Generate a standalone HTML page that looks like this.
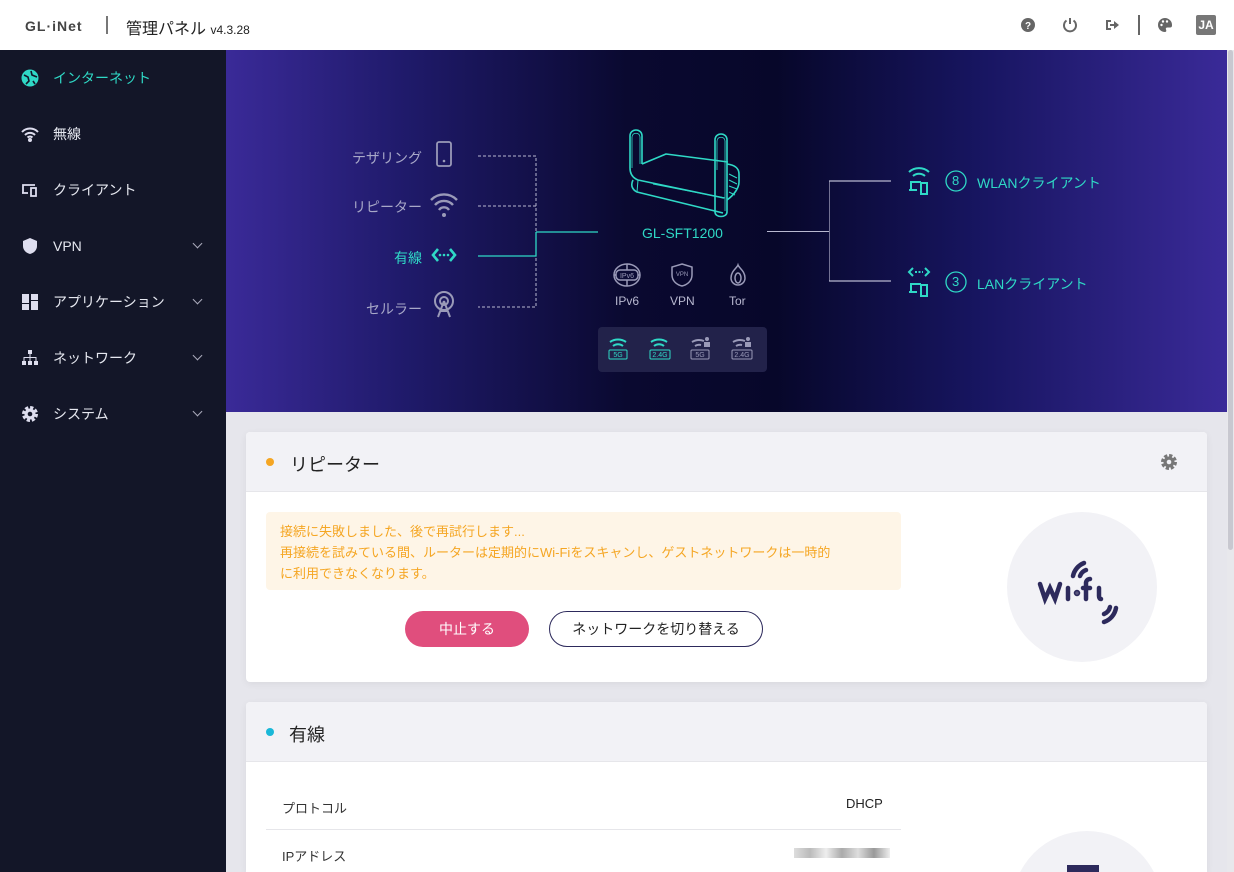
<!DOCTYPE html>
<html><head><meta charset="utf-8"><style>
*{margin:0;padding:0;box-sizing:border-box}
html{width:1234px;height:872px;overflow:hidden}
body{width:1234px;height:872px;overflow:hidden;font-family:"Liberation Sans","Noto Sans CJK JP",sans-serif;background:#e6e6ec;position:relative}
.hdr{position:absolute;left:0;top:0;width:1234px;height:50px;background:#fff}
.side{position:absolute;left:0;top:50px;width:226px;height:822px;background:#131628}
.nav{position:absolute;left:0;width:226px;height:56px;display:flex;align-items:center;color:#e6e8f0;font-size:14px}
.nav svg{position:absolute;left:21px}
.nav span{position:absolute;left:53px}
.nav .ch{position:absolute;left:194px;top:22px;width:7px;height:7px;border-right:1.3px solid #aab;border-bottom:1.3px solid #aab;transform:rotate(45deg)}
.banner{position:absolute;left:226px;top:50px;width:1001px;height:362px;background:linear-gradient(90deg,#3a2a98 0%,#1f1a6a 18%,#0a0930 40%,#07072a 55%,#171560 75%,#3a2a98 100%)}
.sb{position:absolute;left:1227px;top:50px;width:7px;height:822px;background:#e8e8ec}
.sb i{position:absolute;left:1px;top:0;width:5px;height:500px;background:#c8c8d0;border-radius:3px}
.t{position:absolute;white-space:nowrap}
.card{position:absolute;left:246px;width:961px;background:#fff;border-radius:4px;overflow:hidden;box-shadow:0 2px 8px rgba(0,0,0,.06)}
.ch2{height:60px;background:#f2f2f6;border-bottom:1px solid #e6e6ea;position:relative}
</style></head><body>
<div class="hdr">
 <div class="t" style="left:25px;top:18px;font-size:14px;font-weight:bold;color:#444;letter-spacing:1px">GL·iNet</div>
 <div style="position:absolute;left:106px;top:16px;width:2px;height:18px;background:#777"></div>
 <div class="t" style="left:126px;top:15px;font-size:16px;color:#222">管理パネル <span style="font-size:12px">v4.3.28</span></div>
 <svg style="position:absolute;left:1020px;top:17px" width="16" height="16"><circle cx="8" cy="8" r="7" fill="#666"/><text x="8" y="12" font-size="10" font-weight="bold" fill="#fff" text-anchor="middle" font-family="Liberation Sans">?</text></svg>
 <svg style="position:absolute;left:1062px;top:17px" width="16" height="16" fill="none" stroke="#666" stroke-width="2"><path d="M8 1v6"/><path d="M4.5 3.5a6 6 0 1 0 7 0"/></svg>
 <svg style="position:absolute;left:1104px;top:17px" width="16" height="16"><path d="M2 3h5v2H4v6h3v2H2z" fill="#666"/><path d="M6 7h4V4l5 4-5 4V9H6z" fill="#666"/></svg>
 <div style="position:absolute;left:1138px;top:15px;width:2px;height:20px;background:#666"></div>
 <svg style="position:absolute;left:1157px;top:17px" width="16" height="16"><path d="M8 1a7 7 0 0 0 0 14c1.5 0 1.5-1.5 1-2.5s0-2 1.5-2H13a2 2 0 0 0 2-2A7 7 0 0 0 8 1z" fill="#666"/><circle cx="4.5" cy="8" r="1.2" fill="#fff"/><circle cx="6" cy="4.5" r="1.2" fill="#fff"/><circle cx="10" cy="4.5" r="1.2" fill="#fff"/></svg>
 <div style="position:absolute;left:1196px;top:15px;width:20px;height:20px;background:#777;border-radius:2px;color:#fff;font-size:12px;font-weight:bold;text-align:center;line-height:20px">JA</div>
</div>
<div class="side">
 <div class="nav" style="top:0;color:#2fd9c6"><svg width="18" height="18"><circle cx="9" cy="9" r="8.5" fill="#2fd9c6"/><path d="M3 6l4 2 1 4-3 3M10 2l1 4 5 2M12 12l2 3" stroke="#131628" stroke-width="1.6" fill="none"/></svg><span>インターネット</span></div>
 <div class="nav" style="top:56px"><svg width="18" height="18" fill="none" stroke="#dde" stroke-width="2"><path d="M1 7a11 11 0 0 1 16 0M4 10a7 7 0 0 1 10 0M6.5 12.5a3.5 3.5 0 0 1 5 0"/><circle cx="9" cy="15" r="1" fill="#dde"/></svg><span>無線</span></div>
 <div class="nav" style="top:112px"><svg width="18" height="18" fill="none" stroke="#dde" stroke-width="1.8"><path d="M2 12V4h12"/><path d="M1 12h6"/><rect x="10" y="7" width="5" height="8"/></svg><span>クライアント</span></div>
 <div class="nav" style="top:168px"><svg width="18" height="18"><path d="M9 1l7 3v5c0 4-3 7-7 8-4-1-7-4-7-8V4z" fill="#dde"/></svg><span>VPN</span><i class="ch"></i></div>
 <div class="nav" style="top:224px"><svg width="18" height="18" fill="#dde"><rect x="1" y="1" width="7" height="9"/><rect x="1" y="11" width="7" height="6"/><rect x="10" y="1" width="7" height="6"/><rect x="10" y="8" width="7" height="9"/></svg><span>アプリケーション</span><i class="ch"></i></div>
 <div class="nav" style="top:280px"><svg width="18" height="18" fill="#dde"><rect x="7" y="1" width="4" height="4"/><rect x="1" y="12" width="4" height="4"/><rect x="7" y="12" width="4" height="4"/><rect x="13" y="12" width="4" height="4"/><path d="M8.5 5h1v3h6v4h-1V9H9.5v3h-1V9H3.5v3h-1V8h6z"/></svg><span>ネットワーク</span><i class="ch"></i></div>
 <div class="nav" style="top:336px"><svg width="18" height="18"><circle cx="9" cy="9" r="6" fill="none" stroke="#dde" stroke-width="4" stroke-dasharray="3 1.7"/><circle cx="9" cy="9" r="5.5" fill="#dde"/><circle cx="9" cy="9" r="2.3" fill="#131628"/></svg><span>システム</span><i class="ch"></i></div>
</div>
<div class="banner">
 <div class="t" style="left:126px;top:98px;font-size:14px;color:#a8a8c8">テザリング</div>
 <div class="t" style="left:126px;top:147px;font-size:14px;color:#a8a8c8">リピーター</div>
 <div class="t" style="left:168px;top:198px;font-size:14px;color:#2fd9c6">有線</div>
 <div class="t" style="left:140px;top:249px;font-size:14px;color:#a8a8c8">セルラー</div>
 <svg style="position:absolute;left:200px;top:88px" width="40" height="190" fill="none">
  <rect x="11" y="4" width="14" height="24" rx="2" stroke="#9a9ab8" stroke-width="1.8"/><circle cx="18" cy="23" r="1.3" fill="#9a9ab8"/>
  <g stroke="#9a9ab8" stroke-width="2.4"><path d="M5 62a18 18 0 0 1 26 0M9 67a12 12 0 0 1 18 0M13 72a6 6 0 0 1 10 0"/></g><circle cx="18" cy="77" r="2" fill="#9a9ab8"/>
  <path d="M12 111l-5 6 5 6M24 111l5 6-5 6" stroke="#2fd9c6" stroke-width="2.6"/><g fill="#2fd9c6"><circle cx="14" cy="117" r="1.3"/><circle cx="18" cy="117" r="1.3"/><circle cx="22" cy="117" r="1.3"/></g>
  <circle cx="18" cy="163" r="9" stroke="#9a9ab8" stroke-width="2"/><circle cx="18" cy="163" r="4" stroke="#9a9ab8" stroke-width="2"/><path d="M18 163l-6 16M18 163l6 16M14 173h8" stroke="#9a9ab8" stroke-width="2"/>
 </svg>
 <svg style="position:absolute;left:250px;top:100px" width="130" height="160" fill="none">
  <path d="M2 6h58v151H2M2 56h58M60 82H122" stroke="#b8b8d0" stroke-dasharray="3 2"/>
  <path d="M2 106h58V82" stroke="#2fd9c6" stroke-width="1.3"/>
  <path d="M60 82h62" stroke="#2fd9c6" stroke-width="1.3"/>
 </svg>
 <svg style="position:absolute;left:395px;top:78px" width="125" height="90" fill="none" stroke="#2fd9c6" stroke-width="1.6" stroke-linejoin="round">
  <path d="M9 40V8c0-8 12-8 12 0v28"/><path d="M11 40V9c0-5 8-5 8 0v27" stroke-width="0.8"/>
  <path d="M21 36l24-10 62 8"/>
  <path d="M9 40c0 6 3 10 8 12l86 18"/>
  <path d="M12 52c-3 6 0 10 4 12l86 21"/>
  <path d="M17 52l-1 12M32 56l72 14" stroke-width="1"/>
  <path d="M94 42V12c0-8 12-8 12 0v72c0 6-12 6-12 0V42"/><path d="M96 42V13c0-5 8-5 8 0v70" stroke-width="0.8"/>
  <path d="M106 36c8 1 12 4 12 10v8c0 6-5 13-12 18"/>
  <path d="M108 46l8 4M108 52l8 4M108 58l8 3M108 64l6 3" stroke-width="1"/>
 </svg>
 <div class="t" style="left:416px;top:175px;font-size:14px;color:#2fd9c6">GL-SFT1200</div>
 <div style="position:absolute;left:541px;top:181px;width:62px;height:1px;background:#b8b8d0"></div>
 <svg style="position:absolute;left:603px;top:130px" width="62" height="104" fill="none" stroke="#b8b8d0" stroke-width="1.2"><path d="M0 1h62M0 1v100h62"/></svg>
 <svg style="position:absolute;left:386px;top:212px" width="140" height="30" fill="none" stroke="#9a9ab8" stroke-width="1.5">
  <ellipse cx="15" cy="13" rx="13" ry="11"/><path d="M15 2v22M2 13h26"/><rect x="4" y="8" width="22" height="10" rx="4" fill="#0c0c36"/><text x="15" y="16" font-size="7" fill="#9a9ab8" stroke="none" text-anchor="middle" font-family="Liberation Sans">IPv6</text>
  <path d="M70 2l10 3v8c0 6-5 10-10 11-5-1-10-5-10-11V5z"/><text x="70" y="14" font-size="6" fill="#9a9ab8" stroke="none" text-anchor="middle" font-family="Liberation Sans">VPN</text>
  <path d="M126 3c-1 3-7 6-7 13a7 7 0 0 0 14 0c0-7-6-10-7-13z"/><ellipse cx="126" cy="16" rx="3" ry="5"/>
 </svg>
 <div class="t" style="left:389px;top:244px;font-size:12px;color:#b8b8d0">IPv6</div>
 <div class="t" style="left:444px;top:244px;font-size:12px;color:#b8b8d0">VPN</div>
 <div class="t" style="left:503px;top:244px;font-size:12px;color:#b8b8d0">Tor</div>
 <div style="position:absolute;left:372px;top:277px;width:169px;height:45px;background:#22224a;border-radius:4px"></div>
 <svg style="position:absolute;left:380px;top:285px" width="160" height="30" fill="none" stroke-width="2">
  <g stroke="#2fd9c6"><path d="M4 7a14 14 0 0 1 16 0M7 11a8 8 0 0 1 10 0"/><path d="M45 7a14 14 0 0 1 16 0M48 11a8 8 0 0 1 10 0"/></g>
  <g stroke="#9a9ab8"><path d="M86 7a14 14 0 0 1 12 -1M89 11a8 8 0 0 1 6 -1"/><path d="M127 7a14 14 0 0 1 12 -1M130 11a8 8 0 0 1 6 -1"/></g>
  <g fill="#9a9ab8" stroke="none"><rect x="98" y="7" width="6" height="5"/><circle cx="101" cy="4" r="2"/><rect x="139" y="7" width="6" height="5"/><circle cx="142" cy="4" r="2"/></g>
  <g stroke-width="1"><rect x="3" y="15" width="18" height="9" rx="1" stroke="#2fd9c6"/><rect x="44" y="15" width="20" height="9" rx="1" stroke="#2fd9c6"/><rect x="85" y="15" width="18" height="9" rx="1" stroke="#9a9ab8"/><rect x="126" y="15" width="20" height="9" rx="1" stroke="#9a9ab8"/></g>
  <g font-size="7" stroke="none" text-anchor="middle" font-family="Liberation Sans"><text x="12" y="22" fill="#2fd9c6">5G</text><text x="54" y="22" fill="#2fd9c6">2.4G</text><text x="94" y="22" fill="#9a9ab8">5G</text><text x="136" y="22" fill="#9a9ab8">2.4G</text></g>
 </svg>
 <svg style="position:absolute;left:680px;top:112px" width="40" height="135" fill="none" stroke="#2fd9c6" stroke-width="2">
  <path d="M3 10a15 15 0 0 1 20 0M7 14a9 9 0 0 1 12 0"/><path d="M5 28v-8h10M3 28h8"/><rect x="15" y="21" width="6" height="11"/>
  <path d="M7 106l-4 4 4 4M19 106l4 4-4 4"/><path d="M9 110h8" stroke-dasharray="2 1.5"/><path d="M5 130v-8h10M3 130h8"/><rect x="15" y="123" width="6" height="11"/>
 </svg>
 <svg style="position:absolute;left:718px;top:120px" width="24" height="124" fill="none" stroke="#2fd9c6" stroke-width="1.3"><circle cx="12" cy="11" r="10"/><circle cx="12" cy="112" r="10"/></svg>
 <div class="t" style="left:726px;top:123px;font-size:13px;color:#2fd9c6">8</div>
 <div class="t" style="left:726px;top:224px;font-size:13px;color:#2fd9c6">3</div>
 <div class="t" style="left:751px;top:123px;font-size:14px;color:#2fd9c6">WLANクライアント</div>
 <div class="t" style="left:751px;top:224px;font-size:14px;color:#2fd9c6">LANクライアント</div>
</div>
<div class="sb"><i></i></div>
<div class="card" style="top:432px;height:250px">
 <div class="ch2"><div style="position:absolute;left:20px;top:26px;width:8px;height:8px;border-radius:50%;background:#f5a623"></div><div class="t" style="left:44px;top:19px;font-size:18px;color:#222">リピーター</div>
 <svg style="position:absolute;left:914px;top:21px" width="18" height="18"><circle cx="9" cy="9" r="6" fill="none" stroke="#777" stroke-width="4" stroke-dasharray="3 1.7"/><circle cx="9" cy="9" r="5.5" fill="#777"/><circle cx="9" cy="9" r="2.3" fill="#f2f2f6"/></svg></div>
 <div style="position:absolute;left:20px;top:80px;width:635px;height:78px;background:#fef5e7;border-radius:4px;padding:9px 14px;font-size:13px;line-height:21px;color:#f5a623">接続に失敗しました、後で再試行します...<br>再接続を試みている間、ルーターは定期的にWi-Fiをスキャンし、ゲストネットワークは一時的<br>に利用できなくなります。</div>
 <div style="position:absolute;left:159px;top:179px;width:124px;height:36px;border-radius:18px;background:#e04e7d;color:#fff;font-size:14px;text-align:center;line-height:36px">中止する</div>
 <div style="position:absolute;left:303px;top:179px;width:214px;height:36px;border-radius:18px;border:1px solid #2d2a5c;color:#222;font-size:14px;text-align:center;line-height:34px">ネットワークを切り替える</div>
 <div style="position:absolute;left:761px;top:80px;width:150px;height:150px;border-radius:50%;background:#f2f2f6"></div>
 <svg style="position:absolute;left:790px;top:120px" width="95" height="80" fill="none" stroke="#2d2a5c" stroke-width="4.5" stroke-linecap="round">
  <path d="M4 32l5 15 5-11 5 11 5-15"/><path d="M32 36v11M50 35v-4a4 4 0 0 1 4-4M47 36h7M50 35v12M63 36v8c0 2 1 3 2 3"/>
  <path d="M37 24a18 18 0 0 1 11 -13M44 24a10 10 0 0 1 6 -6"/><path d="M80 56a18 18 0 0 1 -12 14M74 55a10 10 0 0 1 -6 7"/>
  <circle cx="41" cy="41" r="1" fill="#2d2a5c"/>
 </svg>
</div>
<div class="card" style="top:702px;height:170px;border-radius:4px 4px 0 0">
 <div class="ch2"><div style="position:absolute;left:20px;top:26px;width:8px;height:8px;border-radius:50%;background:#1ab8d8"></div><div class="t" style="left:43px;top:19px;font-size:18px;color:#222">有線</div></div>
 <div class="t" style="left:36px;top:96px;font-size:13px;color:#333">プロトコル</div>
 <div class="t" style="left:600px;top:94px;font-size:13px;color:#222">DHCP</div>
 <div style="position:absolute;left:20px;top:127px;width:635px;height:1px;background:#e6e6ea"></div>
 <div class="t" style="left:36px;top:144px;font-size:13px;color:#333">IPアドレス</div>
 <div style="position:absolute;left:548px;top:146px;width:96px;height:10px;background:linear-gradient(90deg,#ddd,#bbb,#eee,#aaa,#ddd,#999,#eee)"></div>
 <div style="position:absolute;left:766px;top:129px;width:150px;height:150px;border-radius:50%;background:#f2f2f6"></div>
 <div style="position:absolute;left:821px;top:163px;width:32px;height:10px;background:#2d2a5c"></div>
</div>
</body></html>
